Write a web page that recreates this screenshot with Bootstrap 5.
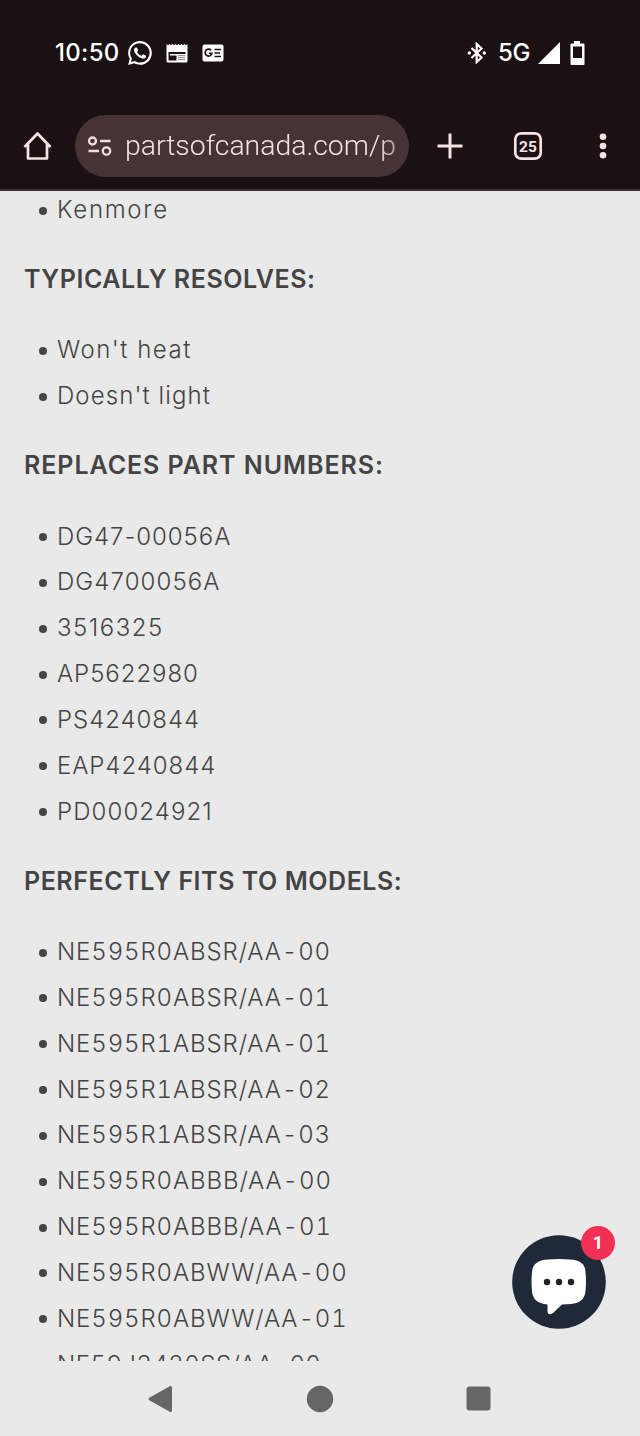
<!DOCTYPE html>
<html lang="en">
<head>
<meta charset="utf-8">
<meta name="viewport" content="width=device-width, initial-scale=1">
<title>Parts of Canada</title>
<link href="https://cdn.jsdelivr.net/npm/bootstrap@5.3.0/dist/css/bootstrap.min.css" rel="stylesheet">
<style>
body{background:#e9e9e9;color:#444;font-family:Inter,"Liberation Sans",sans-serif;height:1436px;overflow:hidden}
svg{display:block;flex:none}
.phone{height:1436px}
.chrome-top{background:#1b1114;color:#f6e2e4;height:191px;border-bottom:2px solid #3b3134;flex:none}
.status{height:105px;padding:0 54px 0 55px;color:#fff}
.clock{font-size:24px;font-weight:500;letter-spacing:.3px;line-height:1;width:73px}
.status-icons{gap:14px}
.net{font-size:24px;font-weight:500;line-height:1;letter-spacing:-.4px;margin:0 8px 0 11px}
.toolbar-row{height:82px;padding-left:23px}
.omnibox{width:334px;height:62px;background:#463336;margin:0 27px 0 23px;padding:0 11px 0 12px}
.url{font:350 28.4px/40px Roboto,sans-serif;width:273px;margin-left:13px;-webkit-mask-image:linear-gradient(90deg,#000 92%,rgba(0,0,0,.6));mask-image:linear-gradient(90deg,#000 92%,rgba(0,0,0,.6))}
.tabs-icon{margin-left:49px}
.menu-icon{margin-left:55px}
.page{padding-left:24px;font-size:24px;line-height:45.85px}
.scroll{margin-top:-4px}
.page h2{font-size:25px;line-height:45.85px;margin:24.35px 0;font-weight:560;letter-spacing:.55px}
.page h2.wide{letter-spacing:.95px}
.page ul{margin:0;padding:0 0 0 33px;list-style:none}
.page li{font-weight:360;white-space:nowrap;position:relative}
.page li::before{content:"";position:absolute;left:-18.5px;top:19.5px;width:8px;height:8px;border-radius:50%;background:#444}
.track-xs{letter-spacing:.95px}
.track-sm{letter-spacing:1.1px}
.track-md{letter-spacing:1.5px}
.track-lg{letter-spacing:1.7px}
.models{letter-spacing:.88px;font-feature-settings:"tnum"}
.models .tight{letter-spacing:.45px}
.android-nav{height:75px;flex:none;padding:0 149px 0 147px}
.chat{left:512px;top:1235px}
.count{left:581px;top:1226px;width:34px;height:34px;background:#f22f55;color:#fff;font:700 18px/34px Roboto,sans-serif}
</style>
</head>
<body>
<div class="phone d-flex flex-column position-relative">
<header class="chrome-top">
  <div class="status d-flex align-items-center">
    <span class="clock">10:50</span>
    <div class="status-icons d-flex align-items-center">
      <svg width="24" height="24" viewBox="0 0 24 24" fill="#fff"><path d="M17.5 14.4c-.3-.15-1.76-.87-2.03-.97-.27-.1-.47-.15-.67.15-.2.3-.77.97-.94 1.16-.17.2-.35.22-.64.08-.3-.15-1.26-.46-2.39-1.48-.88-.79-1.48-1.76-1.65-2.06-.17-.3-.02-.46.13-.6.13-.14.3-.35.45-.52.15-.18.2-.3.3-.5.1-.2.05-.37-.03-.52-.07-.15-.67-1.61-.91-2.2-.25-.59-.49-.5-.67-.51h-.57c-.2 0-.52.07-.79.37-.28.3-1.04 1.02-1.04 2.48s1.06 2.87 1.21 3.07c.15.2 2.1 3.2 5.08 4.49.7.3 1.26.49 1.69.63.71.22 1.36.19 1.87.12.57-.09 1.76-.72 2-1.42.25-.69.25-1.28.18-1.41-.07-.13-.27-.2-.57-.35zM12 .1C5.5.1.2 5.4.2 11.900c0 2.100.55 4.150 1.600 5.950L.1 24l6.300-1.650c1.700.95 3.650 1.450 5.600 1.450 6.500 0 11.800-5.300 11.800-11.900C23.800 5.400 18.500.1 12 .1zm0 21.500c-1.800 0-3.500-.5-5-1.400l-.4-.2-3.700 1 1-3.600-.25-.4A9.700 9.700 0 1 1 12 21.600z"/></svg>
      <svg width="22" height="20" viewBox="0 0 22 20"><path fill="#fff" fill-rule="evenodd" d="M.5 3V1l1.500 1.300L3.500 1l1.500 1.300L6.500 1 8 2.300 9.500 1 11 2.300 12.500 1 14 2.300 15.500 1 17 2.300 18.500 1 20 2.300 21.500 1v17a1.500 1.500 0 0 1-1.500 1.500H2A1.500 1.500 0 0 1 .5 18zM2.500 9v8.500h8V11H19.500V9z"/><path d="M12 12.600h7M12 14.600h7M12 16.600h7" stroke="#777" stroke-width=".9"/><path d="M4 11h7v1.500H4z" fill="#fff"/></svg>
      <svg width="22" height="18" viewBox="0 0 22 18"><rect x=".5" y=".5" width="21" height="17" rx="2" fill="#fff"/><path d="M9.200 6.300A3.500 3.500 0 1 0 10 9.200H6.800M12.500 5.500h6.500M12.500 9h5.500M12.500 12.500h6.500" fill="none" stroke="#1b1114" stroke-width="1.600"/></svg>
    </div>
    <div class="d-flex align-items-center ms-auto">
      <svg width="20" height="22" viewBox="0 0 20 22"><path d="M4.500 6l10 9.500L9.700 20V2l4.800 4.500L4.500 16" fill="none" stroke="#fff" stroke-width="2.200"/><circle cx="2.300" cy="11" r="1.700" fill="#fff"/><circle cx="17.300" cy="11" r="1.700" fill="#fff"/></svg>
      <span class="net">5G</span>
      <svg width="22" height="22" viewBox="0 0 22 22"><path d="M0 22L22 0v22z" fill="#fff"/></svg>
      <svg class="ms-2" width="18" height="24" viewBox="0 0 18 24"><path fill="#fff" fill-rule="evenodd" d="M6 0h6v2.500h3.500q1 0 1 1V23q0 1-1 1h-12q-1 0-1-1V3.500q0-1 1-1H6zM5 5.500V17h9V5.500z"/></svg>
    </div>
  </div>
  <div class="toolbar-row d-flex align-items-center">
    <svg width="29" height="30" viewBox="0 0 29 30" fill="none" stroke="#f6e2e4" stroke-width="2.700" stroke-linejoin="round"><path d="M1.500 16L14.500 2.500 27.500 16M5 13v14.500h19V13"/></svg>
    <div class="omnibox rounded-pill d-flex align-items-center">
      <svg width="25" height="24" viewBox="0 0 25 24" fill="none" stroke="#f6dcdd" stroke-width="2.300"><circle cx="5.500" cy="7" r="3.500"/><path d="M13 7h10.500M1.500 17h10.500"/><circle cx="19.500" cy="17" r="3.700"/></svg>
      <span class="url overflow-hidden text-nowrap">partsofcanada.com/p</span>
    </div>
    <svg width="28" height="28" viewBox="0 0 28 28"><path d="M14 1.500v25M1.500 14h25" stroke="#f6e2e4" stroke-width="3"/></svg>
    <svg class="tabs-icon" width="30" height="30" viewBox="0 0 30 30"><rect x="2.300" y="2.300" width="25.400" height="25.400" rx="6" fill="none" stroke="#f6e2e4" stroke-width="2.700"/><text x="15" y="20.600" text-anchor="middle" font-family="Roboto,sans-serif" font-weight="700" font-size="15.500" fill="#f6e2e4">25</text></svg>
    <svg class="menu-icon" width="10" height="28" viewBox="0 0 10 28" fill="#f6e2e4"><circle cx="5" cy="4.800" r="3.300"/><circle cx="5" cy="14" r="3.300"/><circle cx="5" cy="23.200" r="3.300"/></svg>
  </div>
</header>
<main class="page flex-grow-1 overflow-hidden">
  <div class="scroll">
    <ul><li class="track-lg">Kenmore</li></ul>
    <h2>TYPICALLY RESOLVES:</h2>
    <ul class="track-sm"><li class="track-md">Won't heat</li><li>Doesn't light</li></ul>
    <h2 class="wide">REPLACES PART NUMBERS:</h2>
    <ul class="track-xs"><li>DG47-00056A</li><li class="track-sm">DG4700056A</li><li class="track-md">3516325</li><li>AP5622980</li><li>PS4240844</li><li>EAP4240844</li><li class="track-sm">PD00024921</li></ul>
    <h2>PERFECTLY FITS TO MODELS:</h2>
    <ul class="models"><li>NE595R0ABSR/AA-00</li><li>NE595R0ABSR/AA-01</li><li>NE595R1ABSR/AA-01</li><li>NE595R1ABSR/AA-02</li><li>NE595R1ABSR/AA-03</li><li>NE595R0ABBB/AA-00</li><li>NE595R0ABBB/AA-01</li><li>NE595R0ABWW/AA-00</li><li>NE595R0ABWW/AA-01</li><li class="tight">NE59J3420SS/AA-00</li></ul>
  </div>
</main>
<nav class="android-nav d-flex align-items-center justify-content-between" aria-label="System">
  <svg width="26" height="28" viewBox="0 0 26 28"><path d="M3 14L23.500 2.500v23z" fill="#666" stroke="#666" stroke-width="3" stroke-linejoin="round"/></svg>
  <svg width="28" height="28" viewBox="0 0 28 28"><circle cx="14" cy="14" r="13.200" fill="#666"/></svg>
  <svg width="25" height="25" viewBox="0 0 25 25"><rect x=".5" y=".5" width="24" height="24" rx="3" fill="#666"/></svg>
</nav>
<div class="chat position-absolute">
  <svg width="94" height="94" viewBox="0 0 94 94"><circle cx="47" cy="47" r="46.800" fill="#1f2937"/><path d="M36 24.500Q47 23.500 58 24.500Q73 25 73.500 37Q74.500 47 73.500 56Q72.500 68 59 69L50 69.500L41 78Q36 81 35.500 77V69.500Q20.500 68 20 56Q19 47 20 37Q21 25 36 24.500Z" fill="#fff"/><g fill="#222"><circle cx="35" cy="47" r="3.200"/><circle cx="47" cy="47" r="3.200"/><circle cx="59" cy="47" r="3.200"/></g></svg>
</div>
<span class="count position-absolute rounded-circle text-center">1</span>
</div>
<script src="https://cdn.jsdelivr.net/npm/bootstrap@5.3.0/dist/js/bootstrap.bundle.min.js"></script>
</body>
</html>
